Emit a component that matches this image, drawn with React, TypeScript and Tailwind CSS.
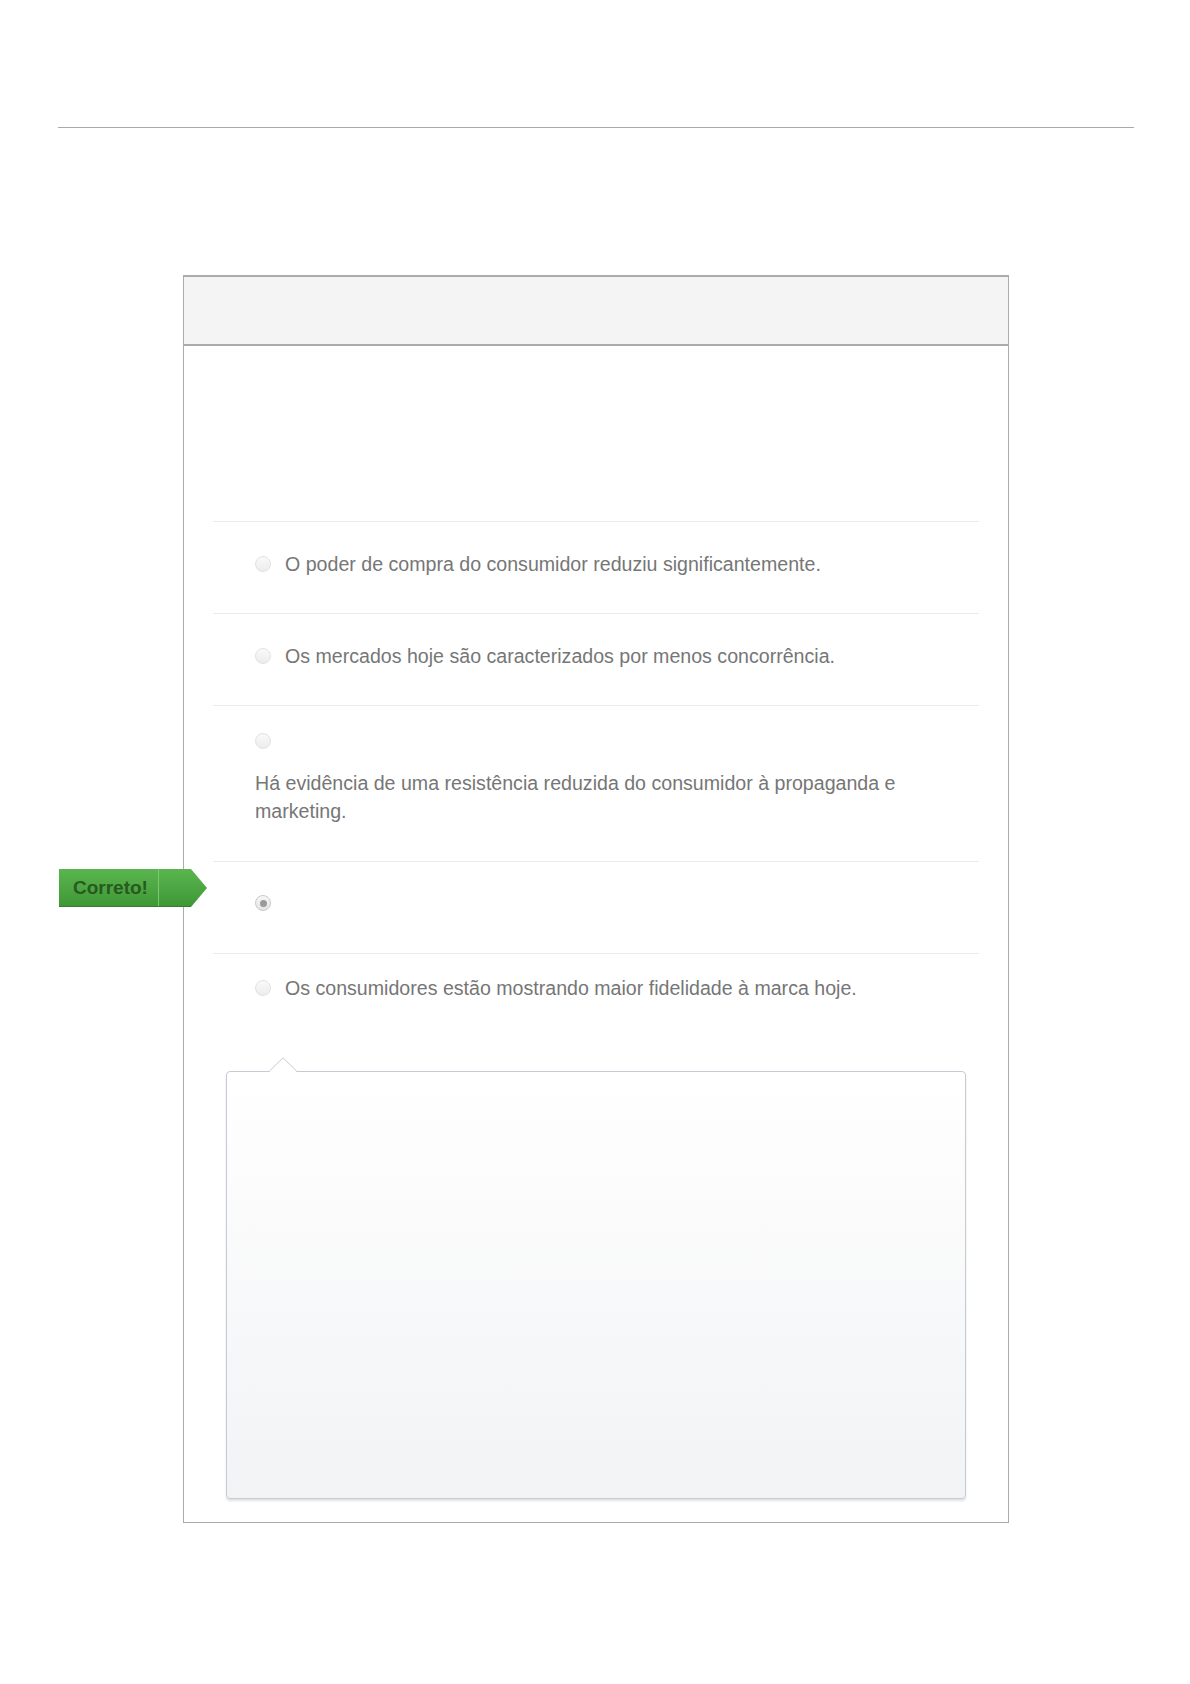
import React from "react";

type Opcao = {
  texto?: string;
  quebra?: boolean;
  marcada?: boolean;
  cls: string;
};

const opcoes: Opcao[] = [
  { texto: "O poder de compra do consumidor reduziu significantemente.", cls: "pt-[28px] pb-[35px]" },
  { texto: "Os mercados hoje são caracterizados por menos concorrência.", cls: "pt-[28px] pb-[35px]" },
  {
    texto: "Há evidência de uma resistência reduzida do consumidor à propaganda e marketing.",
    quebra: true,
    cls: "pt-[27px] pb-[36px]",
  },
  { marcada: true, cls: "pt-[27px] pb-[36px]" },
  { texto: "Os consumidores estão mostrando maior fidelidade à marca hoje.", cls: "pt-[20px] pb-[5px]" },
];

const Radio = ({ marcada }: { marcada?: boolean }) => (
  <span
    className={`inline-flex h-4 w-4 shrink-0 items-center justify-center rounded-full border ${
      marcada
        ? "border-[#c9c9c9] bg-gradient-to-b from-[#f7f7f7] to-[#e4e4e4]"
        : "border-[#e2e2e2] bg-gradient-to-b from-[#fafafa] to-[#ececec]"
    }`}
  >
    {marcada && <span className="h-[7px] w-[7px] rounded-full bg-[#9a9a9a]" />}
  </span>
);

// selo "Correto!" que fica por cima da borda do cartão
const SeloCorreto = () => (
  <div className="absolute left-[-154px] top-[7px] h-[38px] w-[148px]">
    <div className="h-full w-full bg-gradient-to-b from-[#5bb54e] to-[#3d9736] [clip-path:polygon(0_0,132px_0,148px_50%,132px_100%,0_100%)]">
      <div className="flex h-full items-center">
        <span className="w-[99px] pl-[14px] text-[19px] font-bold text-[#285a1f]">Correto!</span>
        <span className="h-full w-px bg-[#7cc872]" />
      </div>
    </div>
    <div className="absolute bottom-0 left-0 h-px w-[132px] bg-[#3a7a31]" />
  </div>
);

export default function App() {
  return (
    <div className="min-h-[1684px] bg-white font-['Liberation_Sans',Arial,sans-serif] text-[#767676]">
      <div className="pl-[58px] pr-[56px] pt-[127px]">
        <div className="h-px bg-[#a9a9a9]" />
      </div>

      <div className="ml-[183px] mt-[147px] w-[826px] border border-t-2 border-[#ababab]">
        <div className="h-[69px] border-b-2 border-[#ababab] bg-[#f4f4f4]" />

        <div className="px-[29px] pb-[23px] pt-[175px]">
          {opcoes.map((o, i) => (
            <div key={i} className={`relative border-t border-[#ebebeb] pl-[42px] ${o.cls}`}>
              {o.marcada && <SeloCorreto />}
              {o.quebra ? (
                <>
                  <div className="flex h-4 items-center">
                    <Radio />
                  </div>
                  <p className="mt-[20px] pr-[60px] text-[19.6px] leading-[28px]">{o.texto}</p>
                </>
              ) : (
                <div className="flex h-[28px] items-center gap-[14px] text-[19.6px] leading-[28px]">
                  <Radio marcada={o.marcada} />
                  {o.texto && <span>{o.texto}</span>}
                </div>
              )}
            </div>
          ))}

          {/* caixa de comentário */}
          <div className="relative ml-[13px] mr-[13px] mt-[64px] h-[428px] rounded-[4px] border border-[#c4cbd2] bg-gradient-to-b from-white to-[#f2f3f5] shadow-[0_2px_2px_rgba(0,0,0,0.12)]">
            <svg className="absolute left-[42px] top-[-15px]" width="29" height="16" viewBox="0 0 29 16">
              <polygon points="0,15 14,1 28,15" fill="#ffffff" />
              <polyline points="0,14.5 14,0.8 28,14.5" fill="none" stroke="#c4cbd2" strokeWidth="1" />
            </svg>
          </div>
        </div>
      </div>
    </div>
  );
}
